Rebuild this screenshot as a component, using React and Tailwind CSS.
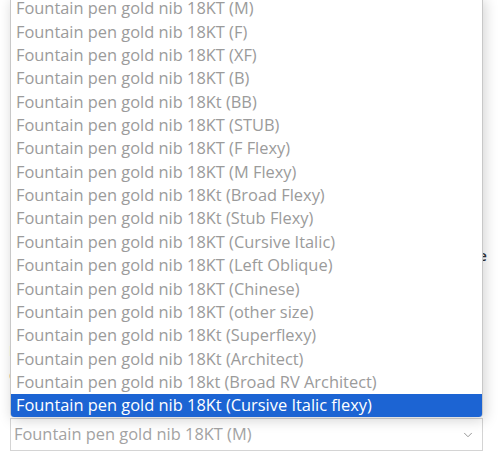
import { ChevronDown } from 'lucide-react';

const OPTIONS = [
  'Fountain pen gold nib 18KT (M)',
  'Fountain pen gold nib 18KT (F)',
  'Fountain pen gold nib 18KT (XF)',
  'Fountain pen gold nib 18KT (B)',
  'Fountain pen gold nib 18Kt (BB)',
  'Fountain pen gold nib 18KT (STUB)',
  'Fountain pen gold nib 18KT (F Flexy)',
  'Fountain pen gold nib 18KT (M Flexy)',
  'Fountain pen gold nib 18Kt (Broad Flexy)',
  'Fountain pen gold nib 18Kt (Stub Flexy)',
  'Fountain pen gold nib 18KT (Cursive Italic)',
  'Fountain pen gold nib 18KT (Left Oblique)',
  'Fountain pen gold nib 18KT (Chinese)',
  'Fountain pen gold nib 18KT (other size)',
  'Fountain pen gold nib 18Kt (Superflexy)',
  'Fountain pen gold nib 18Kt (Architect)',
  'Fountain pen gold nib 18kt (Broad RV Architect)',
  'Fountain pen gold nib 18Kt (Cursive Italic flexy)',
];

export default function App() {
  const selected = OPTIONS.length - 1;

  return (
    <div className="relative w-[500px] h-[453px] overflow-hidden bg-white font-['Open_Sans',sans-serif]">
      {/* page behind the open list */}
      <div className="flex flex-col pl-[10px] w-[487px]">
        <div className="h-[245px]" />
        <p className="text-right text-[15px] font-semibold text-[#333] leading-5">Select the nib size</p>
        <div className="h-[75px]" />
        <p className="text-[15px] font-semibold text-[#333] leading-5 -ml-[1px]">N</p>
        <div className="h-[5px]" />
        <p className="text-[15px] font-semibold text-[#333] leading-5 -ml-[1px]">C</p>
        <div className="h-[33px]" />
        <div className="w-[473px] h-[33px] flex items-center justify-between border border-[#d4d4d4] pl-[3px] pr-[7px] text-[16.4px] text-[#a3a3a3]">
          <span>Fountain pen gold nib 18KT (M)</span>
          <ChevronDown size={14} strokeWidth={1.5} className="text-[#888]" />
        </div>
      </div>

      {/* open option list */}
      <div className="absolute left-[10px] top-[-3px] w-[473px] bg-white border-l border-r border-[#c8c8c8] rounded-b-[4px] shadow-[2px_3px_14px_rgba(0,0,0,0.18)]">
        {OPTIONS.map((o, i) => (
          <div
            key={o}
            className={
              i === selected
                ? 'h-[23.35px] flex items-center px-[5px] text-[16.4px] text-white bg-[#1c64d3] rounded-b-[3px] whitespace-nowrap'
                : 'h-[23.35px] flex items-center px-[5px] text-[16.4px] text-[#9b9b9b] whitespace-nowrap'
            }
          >
            {o}
          </div>
        ))}
      </div>
    </div>
  );
}
